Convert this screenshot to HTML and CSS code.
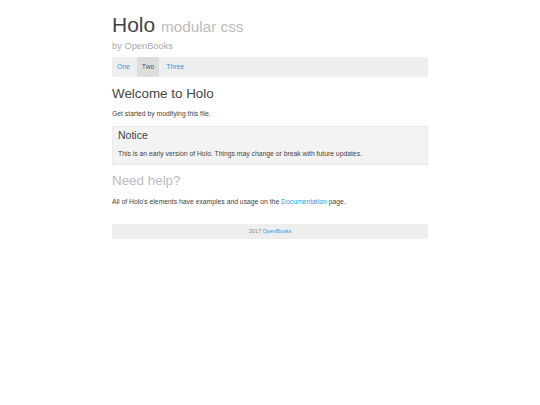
FILE: index.html
```html
<!DOCTYPE html>
<html>
<head>
    <title>Holo</title>
    <link rel="stylesheet" href="styles.css">
</head>
<body>
    <div class="container">
        <header class="masthead">
            <h1>Holo <small>modular css</small></h1>
            <p class="byline">by OpenBooks</p>
        </header>
        <nav class="nav">
            <a href="#">One</a>
            <a href="#" class="active">Two</a>
            <a href="#">Three</a>
        </nav>
        <h2>Welcome to Holo</h2>
        <p>Get started by modifying this file.</p>
        <div class="notice">
            <h3>Notice</h3>
            <p>This is an early version of Holo. Things may change or break with future updates.</p>
        </div>
        <h2 class="muted">Need help?</h2>
        <p>All of Holo's elements have examples and usage on the <a href="#">Documentation</a> page.</p>
        <footer class="footer">2017 <a href="#">OpenBooks</a></footer>
    </div>
</body>
</html>
```

FILE: styles.css
```css
/* General styles */
* {
  box-sizing: border-box;
}

body {
  font-family: "Liberation Sans", Arial, sans-serif;
  margin: 0;
  padding: 0;
  background-color: #fff;
  color: #444;
  font-size: 6.8px;
  line-height: 9px;
}

a {
  color: #2e9ae6;
  text-decoration: none;
}

.container {
  width: 316px;
  margin: 0 auto;
  padding-top: 13px;
}

h1 {
  font-size: 21px;
  font-weight: normal;
  margin: 0;
  line-height: 24px;
  color: #444;
}

h1 small {
  font-size: 15.3px;
  color: #bbb;
}

.byline {
  font-size: 9.3px;
  line-height: 12px;
  color: #aaa;
  margin: 1px 0 5px;
}

.nav {
  display: flex;
  background-color: #eee;
  border-radius: 3px;
}

.nav a {
  padding: 5px 5px 6px;
  margin-right: 2px;
  line-height: 9px;
}

.nav a.active {
  background-color: #ddd;
  color: #555;
  border-radius: 2px;
}

h2 {
  font-size: 13.4px;
  line-height: 16px;
  font-weight: normal;
  color: #444;
  margin: 9px 0 7px;
}

h2.muted {
  color: #bbb;
  margin-top: 8px;
  margin-bottom: 8px;
}

p {
  margin: 0 0 8px;
}

.notice {
  background-color: #f3f3f3;
  border: 1px solid #eaeaea;
  padding: 2px 5px 6px;
  margin-bottom: 8px;
}

.notice h3 {
  font-size: 10.5px;
  line-height: 13px;
  font-weight: normal;
  margin: 0 0 7px;
}

.notice p {
  margin: 0;
}

.footer {
  background-color: #eee;
  border-radius: 3px;
  text-align: center;
  font-size: 5.5px;
  line-height: 7px;
  color: #888;
  padding: 4px 0;
  margin-top: 18px;
}
```
